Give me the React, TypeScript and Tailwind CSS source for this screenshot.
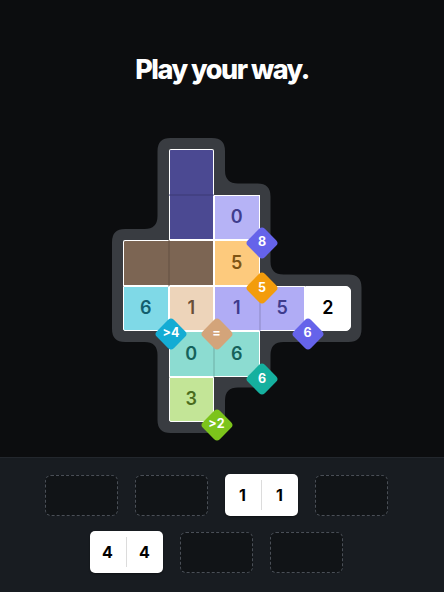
import React from "react";

const S = 45.5;
const P = 11;

type Pt = [number, number];
const X = (i: number) => i * S + P;
const Y = (i: number) => i * S + P;

const outline: Pt[] = [
  [X(1) - P, Y(0) - P],
  [X(2) + P, Y(0) - P],
  [X(2) + P, Y(1) - P],
  [X(3) + P, Y(1) - P],
  [X(3) + P, Y(3) - P],
  [X(5) + P, Y(3) - P],
  [X(5) + P, Y(4) + P],
  [X(3) + P, Y(4) + P],
  [X(3) + P, Y(5) + P],
  [X(2) + P, Y(5) + P],
  [X(2) + P, Y(6) + P],
  [X(1) - P, Y(6) + P],
  [X(1) - P, Y(4) + P],
  [X(0) - P, Y(4) + P],
  [X(0) - P, Y(2) - P],
  [X(1) - P, Y(2) - P],
];

function roundedPath(pts: Pt[], r: number) {
  const n = pts.length;
  let d = "";
  for (let i = 0; i < n; i++) {
    const prev = pts[(i - 1 + n) % n];
    const cur = pts[i];
    const next = pts[(i + 1) % n];
    const v1 = [prev[0] - cur[0], prev[1] - cur[1]];
    const l1 = Math.hypot(v1[0], v1[1]);
    const v2 = [next[0] - cur[0], next[1] - cur[1]];
    const l2 = Math.hypot(v2[0], v2[1]);
    const a: Pt = [cur[0] + (v1[0] / l1) * r, cur[1] + (v1[1] / l1) * r];
    const b: Pt = [cur[0] + (v2[0] / l2) * r, cur[1] + (v2[1] / l2) * r];
    d += (i === 0 ? "M" : "L") + a[0] + " " + a[1] + " Q" + cur[0] + " " + cur[1] + " " + b[0] + " " + b[1] + " ";
  }
  return d + "Z";
}

const font = { fontFamily: "Inter, 'Noto Sans', sans-serif" };

function Cell({ cls, text, textCls }: { cls: string; text?: string; textCls?: string }) {
  return (
    <div className={"flex items-center justify-center border border-white " + cls}>
      {text && <span className={"text-[18px] font-semibold leading-none " + (textCls || "")}>{text}</span>}
    </div>
  );
}

const diamonds: { cx: number; cy: number; label: string; cls: string }[] = [
  { cx: 3, cy: 2, label: "8", cls: "bg-[#6563ea]" },
  { cx: 3, cy: 3, label: "5", cls: "bg-[#f39c0c]" },
  { cx: 4, cy: 4, label: "6", cls: "bg-[#6563ea]" },
  { cx: 1, cy: 4, label: ">4", cls: "bg-[#14acd4]" },
  { cx: 2, cy: 4, label: "=", cls: "bg-[#d3a47a]" },
  { cx: 3, cy: 5, label: "6", cls: "bg-[#15b09f]" },
  { cx: 2, cy: 6, label: ">2", cls: "bg-[#7cc41b]" },
];

function Board() {
  return (
    <div className="relative w-[249.5px] h-[295px] ml-[112px]">
      <svg className="absolute inset-0" width="249.5" height="295" viewBox="0 0 249.5 295">
        <path d={roundedPath(outline, 13)} fill="#393c41" />
      </svg>
      <div className="absolute left-[11px] top-[11px] grid grid-cols-[repeat(5,45.5px)] grid-rows-[repeat(6,45.5px)]">
        <Cell cls="col-start-2 row-start-1 bg-[#4b4992] border-b-black/10 rounded-tl-[2px] rounded-tr-[2px]" />
        <Cell cls="col-start-2 row-start-2 bg-[#4b4992] border-t-black/10" />
        <Cell cls="col-start-3 row-start-2 bg-[#b6b3f6]" text="0" textCls="text-[#403d8e]" />
        <Cell cls="col-start-1 row-start-3 bg-[#7c6553] border-r-black/10 rounded-tl-[2px]" />
        <Cell cls="col-start-2 row-start-3 bg-[#7c6553] border-l-black/10" />
        <Cell cls="col-start-3 row-start-3 bg-[#fdca7d]" text="5" textCls="text-[#7e5414]" />
        <Cell cls="col-start-1 row-start-4 bg-[#7fd9e7] rounded-bl-[2px]" text="6" textCls="text-[#125e6e]" />
        <Cell cls="col-start-2 row-start-4 bg-[#edd4ba]" text="1" textCls="text-[#6a4e36]" />
        <Cell cls="col-start-3 row-start-4 bg-[#b0acf5] border-r-black/10" text="1" textCls="text-[#3e3b8d]" />
        <Cell cls="col-start-4 row-start-4 bg-[#b0acf5] border-l-black/10" text="5" textCls="text-[#3e3b8d]" />
        <Cell cls="col-start-5 row-start-4 bg-white rounded-r-[5px]" text="2" textCls="text-black font-bold" />
        <Cell cls="col-start-2 row-start-5 bg-[#8cdcd1] border-r-black/10" text="0" textCls="text-[#15625b]" />
        <Cell cls="col-start-3 row-start-5 bg-[#8cdcd1] border-l-black/10" text="6" textCls="text-[#15625b]" />
        <Cell cls="col-start-2 row-start-6 bg-[#c3e597] rounded-b-[2px]" text="3" textCls="text-[#4b6b1d]" />
      </div>
      {diamonds.map((d, i) => (
        <div
          key={i}
          className="absolute w-[32px] h-[32px] flex items-center justify-center"
          style={{ left: P + d.cx * S - 16 + 2.5, top: P + d.cy * S - 16 + 2.5 }}
        >
          <div className={"absolute w-[24px] h-[24px] rotate-45 rounded-[4px] " + d.cls} />
          <span className="relative text-white text-[12.5px] font-bold leading-none">{d.label}</span>
        </div>
      ))}
    </div>
  );
}

function EmptySlot() {
  return <div className="w-[73px] h-[41px] rounded-[6px] border border-dashed border-[#4a4f57] bg-[#111417]" />;
}

function FilledSlot({ a, b }: { a: string; b: string }) {
  return (
    <div className="w-[73px] h-[42px] rounded-[5px] bg-white flex items-center shadow-[0_1px_2px_rgba(0,0,0,0.4)]">
      <div className="flex-1 flex items-center justify-center text-[16px] font-bold text-black">{a}</div>
      <div className="w-px h-[30px] bg-[#dcdcdc]" />
      <div className="flex-1 flex items-center justify-center text-[16px] font-bold text-black">{b}</div>
    </div>
  );
}

export default function App() {
  return (
    <div className="w-[444px] h-[592px] overflow-hidden bg-[#0c0d0f] flex flex-col" style={font}>
      <div className="h-[457px] flex flex-col">
        <h1 className="pt-[54px] h-[86px] text-center text-white text-[27px] leading-[32px] font-extrabold tracking-[-0.055em]">
          Play your way.
        </h1>
        <div className="mt-[52px]">
          <Board />
        </div>
      </div>
      <div className="flex-1 bg-[#181c21] border-t border-[#23272d] pt-[16px] pr-[12px] flex flex-col items-center gap-[15px]">
        <div className="flex gap-[17px] items-center">
          <EmptySlot />
          <EmptySlot />
          <FilledSlot a="1" b="1" />
          <EmptySlot />
        </div>
        <div className="flex gap-[17px] items-center">
          <FilledSlot a="4" b="4" />
          <EmptySlot />
          <EmptySlot />
        </div>
      </div>
    </div>
  );
}
